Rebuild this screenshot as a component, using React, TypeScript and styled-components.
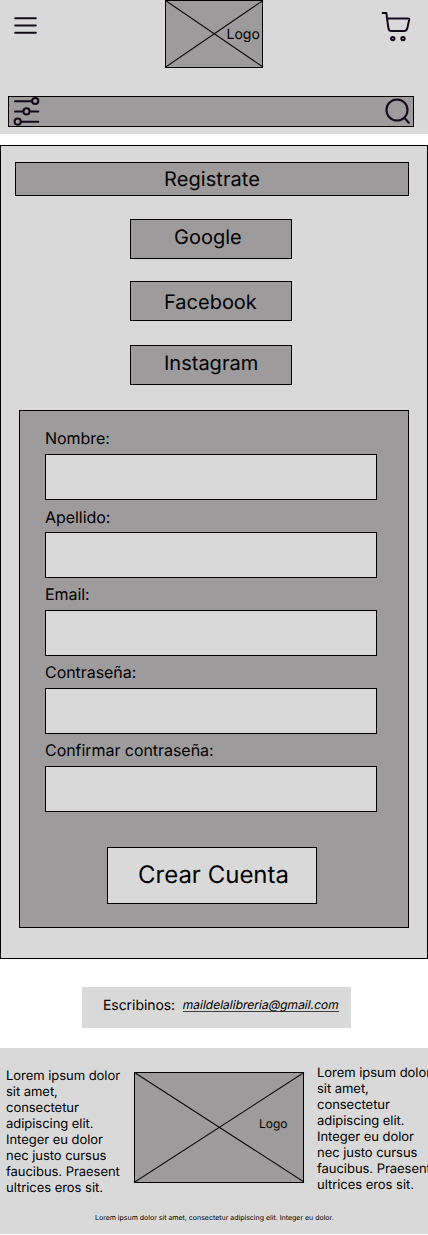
import React from "react";
import styled, { createGlobalStyle } from "styled-components";

const light = "#d9d9d9";
const mid = "#9e9b9c";
const ink = "#150a1c";

const GlobalStyle = createGlobalStyle`
  *, *::before, *::after { box-sizing: border-box; }
  html, body { margin: 0; background: #fff; }
  body {
    font-family: Inter, "Liberation Sans", sans-serif;
    color: #000;
    overflow-x: hidden;
    text-rendering: geometricPrecision;
  }
`;

const Page = styled.div`
  width: 428px;
  height: 1235px;
  overflow: hidden;
  display: flex;
  flex-direction: column;
`;

const Header = styled.header`
  height: 134px;
  background: ${light};
  padding: 0 14px 0 8px;
`;

const TopBar = styled.div`
  display: flex;
  align-items: flex-start;
  justify-content: space-between;
  height: 96px;
`;

const MenuButton = styled.button`
  border: 0;
  padding: 0;
  margin: 15px 0 0 4px;
  background: none;
  display: flex;
`;

const CartButton = styled(MenuButton)`
  margin: 10px 1px 0 0;
`;

const LogoBox = styled.div<{ $w: number; $h: number }>`
  position: relative;
  flex: none;
  width: ${(p) => p.$w}px;
  height: ${(p) => p.$h}px;
  background: ${mid};
  border: 1px solid #000;
  svg {
    display: block;
    margin: -1px;
    overflow: visible;
  }
`;

const HeaderLogo = styled(LogoBox)`
  margin-left: 8px;
`;

const LogoText = styled.span<{ $size: number; $x: number; $y: number }>`
  position: absolute;
  left: ${(p) => p.$x}px;
  top: ${(p) => p.$y}px;
  font-size: ${(p) => p.$size}px;
  line-height: 17px;
`;

const SearchBar = styled.div`
  height: 31px;
  border: 1px solid #000;
  background: ${mid};
  display: flex;
  justify-content: space-between;
  padding: 0 1px 0 4px;
  svg { overflow: visible; }
`;

const Panel = styled.main`
  margin-top: 11px;
  height: 814px;
  border: 1px solid #000;
  background: ${light};
  padding: 16px 18px 0 14px;
  display: flex;
  flex-direction: column;
`;

const Title = styled.h1`
  margin: 0;
  height: 34px;
  border: 1px solid #000;
  background: ${mid};
  padding: 4px 0 0 148px;
  font-size: 20px;
  font-weight: 400;
  line-height: 24px;
  letter-spacing: 0.08px;
`;

const Providers = styled.div`
  display: flex;
  flex-direction: column;
  margin: 23px 0 0 115px;
`;

const Provider = styled.button<{ $gap: number; $x: number; $y: number }>`
  width: 162px;
  height: 40px;
  margin: 0 0 ${(p) => p.$gap}px;
  border: 1px solid #000;
  background: ${mid};
  padding: ${(p) => p.$y}px 0 0 ${(p) => p.$x}px;
  font: 400 20px/24px Inter, "Liberation Sans", sans-serif;
  text-rendering: inherit;
  color: #000;
  text-align: left;
  display: flex;
  align-items: flex-start;
`;

const Form = styled.form`
  width: 390px;
  height: 518px;
  margin: 25px 0 0 4px;
  border: 1px solid #000;
  background: ${mid};
  padding: 11px 31px 0 25px;
`;

const Field = styled.label<{ $gap?: number }>`
  display: flex;
  flex-direction: column;
  justify-content: flex-end;
  gap: ${(p) => p.$gap ?? 6}px;
  width: 332px;
  height: 78px;
  font-size: 16px;
  line-height: 19px;
  letter-spacing: -0.05px;
`;

const Input = styled.input`
  display: block;
  width: 100%;
  height: 46px;
  border: 1px solid #000;
  border-radius: 0;
  background: ${light};
  padding: 0 10px;
`;

const Submit = styled.button`
  display: flex;
  align-items: flex-start;
  width: 210px;
  height: 57px;
  margin: 35px 0 0 62px;
  border: 1px solid #000;
  background: ${light};
  padding: 12px 0 0 30px;
  font: 400 24px/29px Inter, "Liberation Sans", sans-serif;
  text-rendering: inherit;
  color: #000;
`;

const Contact = styled.section`
  width: 269px;
  height: 41px;
  flex: none;
  margin: 28px 0 0 82px;
  background: ${light};
  display: flex;
  align-items: flex-start;
  padding: 10px 0 0 21px;
  gap: 8px;
  font-size: 14px;
  line-height: 17px;
  letter-spacing: -0.06px;
`;

const Mail = styled.a`
  display: block;
  height: 15px;
  border-bottom: 1px solid #3c3c3c;
  font-size: 12px;
  line-height: 15px;
  letter-spacing: 0;
  text-decoration: none;
  color: #000;
`;

/* Slants the upright face so the letters keep their roman shapes. */
const Slanted = styled.span`
  display: block;
  transform: skewX(-12deg);
`;

const Footer = styled.footer`
  flex: none;
  margin-top: 20px;
  height: 186px;
  background: ${light};
`;

const FooterRow = styled.div`
  display: flex;
  align-items: flex-start;
  height: 165px;
  padding-left: 6px;
`;

const Blurb = styled.p<{ $top: number }>`
  flex: none;
  width: 116px;
  margin: ${(p) => p.$top}px 0 0;
  font-size: 13px;
  line-height: 16px;
  letter-spacing: -0.04px;
  white-space: nowrap;
`;

const FooterLogo = styled(LogoBox)`
  margin: 24px 13px 0 12px;
`;

const Legal = styled.p`
  margin: 0;
  padding-left: 95px;
  font-size: 7px;
  line-height: 9px;
  white-space: nowrap;
`;

const Cross = ({ w, h }: { w: number; h: number }) => (
  <svg width={w} height={h} stroke="#111" strokeWidth="1.1" fill="none">
    <path d={`M.5 .5L${w} ${h - 1}M0 ${h - 0.5}L${w} .5`} />
  </svg>
);

const MenuIcon = () => (
  <svg width="26" height="21" fill="none" stroke={ink} strokeWidth="2" strokeLinecap="round">
    <path d="M3.2 3.3H23.8M3.2 10.5H23.8M3.2 17.8H23.8" />
  </svg>
);

const CartIcon = () => (
  <svg width="32" height="33" fill="none" stroke={ink} strokeWidth="2" strokeLinecap="round" strokeLinejoin="round">
    <path d="M1.6 3H5.4L6 8.5H27.4Q28.4 8.5 28.2 9.7L26.2 18.6Q25.6 21 23.4 21H10.4Q8 21 7.5 18.6L6 8.5" />
    <circle cx="11.8" cy="28.6" r="1.7" />
    <circle cx="22" cy="28.6" r="1.7" />
  </svg>
);

const FilterIcon = () => (
  <svg width="28" height="29" fill="none" stroke={ink} strokeWidth="2" strokeLinecap="round">
    <path d="M2 4.2H19M2 14.5H10.3M17 14.5H25.3M8.5 24.8H25.3" />
    <circle cx="22.2" cy="4" r="3.1" />
    <circle cx="13.5" cy="14.4" r="3.1" />
    <circle cx="4.7" cy="24.7" r="3.1" />
  </svg>
);

const SearchIcon = () => (
  <svg width="28" height="29" fill="none" stroke={ink} strokeWidth="2.1" strokeLinecap="round">
    <circle cx="13" cy="13" r="10.5" />
    <path d="M20.5 21L24.8 25.8" />
  </svg>
);

const lorem = [
  "Lorem ipsum dolor",
  "sit amet,",
  "consectetur",
  "adipiscing elit.",
  "Integer eu dolor",
  "nec justo cursus",
  "faucibus. Praesent",
  "ultrices eros sit.",
];

const LoremBlurb = ({ top }: { top: number }) => (
  <Blurb $top={top}>
    {lorem.map((line) => (
      <React.Fragment key={line}>
        {line}
        <br />
      </React.Fragment>
    ))}
  </Blurb>
);

export default function App() {
  return (
    <Page>
      <GlobalStyle />
      <Header>
        <TopBar>
          <MenuButton type="button" aria-label="Menú">
            <MenuIcon />
          </MenuButton>
          <HeaderLogo $w={98} $h={68}>
            <Cross w={98} h={68} />
            <LogoText $size={14} $x={61} $y={25}>Logo</LogoText>
          </HeaderLogo>
          <CartButton type="button" aria-label="Carrito">
            <CartIcon />
          </CartButton>
        </TopBar>
        <SearchBar>
          <FilterIcon />
          <SearchIcon />
        </SearchBar>
      </Header>

      <Panel>
        <Title>Registrate</Title>
        <Providers>
          <Provider type="button" $gap={22} $x={43} $y={5}>Google</Provider>
          <Provider type="button" $gap={24} $x={33} $y={8}>Facebook</Provider>
          <Provider type="button" $gap={0} $x={33} $y={5}>Instagram</Provider>
        </Providers>
        <Form>
          <Field>Nombre:<Input /></Field>
          <Field $gap={5}>Apellido:<Input /></Field>
          <Field>Email:<Input type="email" /></Field>
          <Field>Contraseña:<Input type="password" /></Field>
          <Field>Confirmar contraseña:<Input type="password" /></Field>
          <Submit type="button">Crear Cuenta</Submit>
        </Form>
      </Panel>

      <Contact>
        <span>Escribinos:</span>
        <Mail href="mailto:maildelalibreria@gmail.com">
          <Slanted>maildelalibreria@gmail.com</Slanted>
        </Mail>
      </Contact>

      <Footer>
        <FooterRow>
          <LoremBlurb top={20} />
          <FooterLogo $w={170} $h={111}>
            <Cross w={170} h={111} />
            <LogoText $size={12} $x={124} $y={42}>Logo</LogoText>
          </FooterLogo>
          <LoremBlurb top={17} />
        </FooterRow>
        <Legal>Lorem ipsum dolor sit amet, consectetur adipiscing elit. Integer eu dolor.</Legal>
      </Footer>
    </Page>
  );
}
